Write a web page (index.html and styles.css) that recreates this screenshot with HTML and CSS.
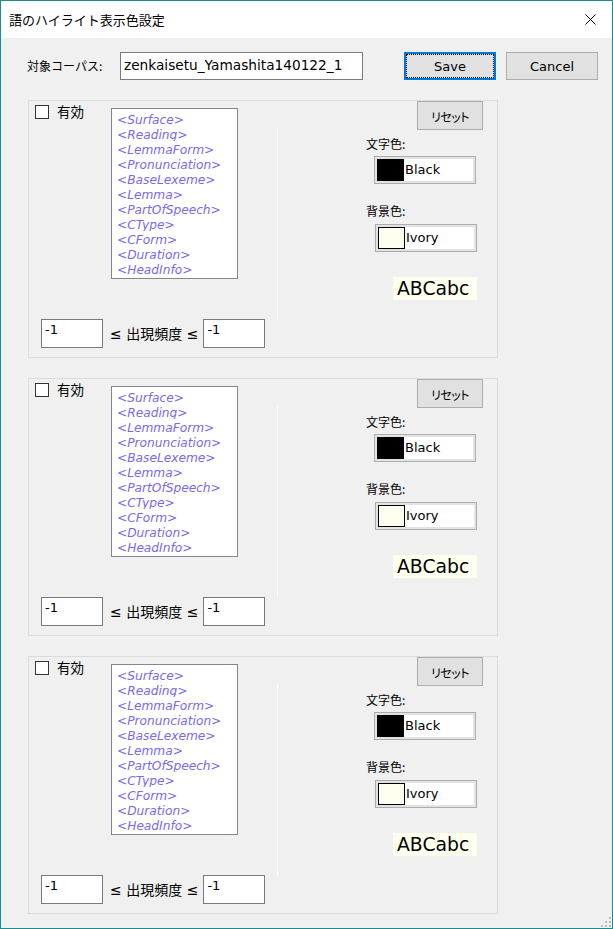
FILE: index.html
```html
<!DOCTYPE html>
<html lang="ja">
<head>
<meta charset="utf-8">
<title>語のハイライト表示色設定</title>
<link rel="stylesheet" href="styles.css">
</head>
<body>
<div class="window">
  <div class="titlebar">
    <span class="title">語のハイライト表示色設定</span>
    <svg class="close" width="11" height="11" viewBox="0 0 11 11"><path d="M0.5 0.5 L10.5 10.5 M10.5 0.5 L0.5 10.5" stroke="#000" stroke-width="1" fill="none"/></svg>
  </div>
  <div class="client">
    <div class="toprow">
      <span class="corpus-label">対象コーパス:</span>
      <div class="textbox corpus">zenkaisetu_Yamashita140122_1</div>
      <div class="btn btn-default">Save</div>
      <div class="btn">Cancel</div>
    </div>

    <div class="panels">
      <div class="panel">
        <div class="left">
          <div class="left-top">
            <div class="check"><span class="box"></span><span class="check-label">有効</span></div>
            <div class="listbox">
              <div class="item"><span>&lt;Surface&gt;</span></div>
              <div class="item"><span>&lt;Reading&gt;</span></div>
              <div class="item"><span>&lt;LemmaForm&gt;</span></div>
              <div class="item"><span>&lt;Pronunciation&gt;</span></div>
              <div class="item"><span>&lt;BaseLexeme&gt;</span></div>
              <div class="item"><span>&lt;Lemma&gt;</span></div>
              <div class="item"><span>&lt;PartOfSpeech&gt;</span></div>
              <div class="item"><span>&lt;CType&gt;</span></div>
              <div class="item"><span>&lt;CForm&gt;</span></div>
              <div class="item"><span>&lt;Duration&gt;</span></div>
              <div class="item"><span>&lt;HeadInfo&gt;</span></div>
            </div>
          </div>
          <div class="left-bottom">
            <div class="textbox small">-1</div>
            <span class="freq">≤ 出現頻度 ≤</span>
            <div class="textbox small">-1</div>
          </div>
        </div>
        <div class="sep"></div>
        <div class="right">
          <div class="btn reset">リセット</div>
          <span class="lbl lbl1">文字色:</span>
          <div class="combo combo1"><span class="swatch black"></span><span class="cname">Black</span></div>
          <span class="lbl lbl2">背景色:</span>
          <div class="combo combo2"><span class="swatch ivory"></span><span class="cname">Ivory</span></div>
          <div class="preview">ABCabc</div>
        </div>
      </div>

      <div class="panel">
        <div class="left">
          <div class="left-top">
            <div class="check"><span class="box"></span><span class="check-label">有効</span></div>
            <div class="listbox">
              <div class="item"><span>&lt;Surface&gt;</span></div>
              <div class="item"><span>&lt;Reading&gt;</span></div>
              <div class="item"><span>&lt;LemmaForm&gt;</span></div>
              <div class="item"><span>&lt;Pronunciation&gt;</span></div>
              <div class="item"><span>&lt;BaseLexeme&gt;</span></div>
              <div class="item"><span>&lt;Lemma&gt;</span></div>
              <div class="item"><span>&lt;PartOfSpeech&gt;</span></div>
              <div class="item"><span>&lt;CType&gt;</span></div>
              <div class="item"><span>&lt;CForm&gt;</span></div>
              <div class="item"><span>&lt;Duration&gt;</span></div>
              <div class="item"><span>&lt;HeadInfo&gt;</span></div>
            </div>
          </div>
          <div class="left-bottom">
            <div class="textbox small">-1</div>
            <span class="freq">≤ 出現頻度 ≤</span>
            <div class="textbox small">-1</div>
          </div>
        </div>
        <div class="sep"></div>
        <div class="right">
          <div class="btn reset">リセット</div>
          <span class="lbl lbl1">文字色:</span>
          <div class="combo combo1"><span class="swatch black"></span><span class="cname">Black</span></div>
          <span class="lbl lbl2">背景色:</span>
          <div class="combo combo2"><span class="swatch ivory"></span><span class="cname">Ivory</span></div>
          <div class="preview">ABCabc</div>
        </div>
      </div>

      <div class="panel">
        <div class="left">
          <div class="left-top">
            <div class="check"><span class="box"></span><span class="check-label">有効</span></div>
            <div class="listbox">
              <div class="item"><span>&lt;Surface&gt;</span></div>
              <div class="item"><span>&lt;Reading&gt;</span></div>
              <div class="item"><span>&lt;LemmaForm&gt;</span></div>
              <div class="item"><span>&lt;Pronunciation&gt;</span></div>
              <div class="item"><span>&lt;BaseLexeme&gt;</span></div>
              <div class="item"><span>&lt;Lemma&gt;</span></div>
              <div class="item"><span>&lt;PartOfSpeech&gt;</span></div>
              <div class="item"><span>&lt;CType&gt;</span></div>
              <div class="item"><span>&lt;CForm&gt;</span></div>
              <div class="item"><span>&lt;Duration&gt;</span></div>
              <div class="item"><span>&lt;HeadInfo&gt;</span></div>
            </div>
          </div>
          <div class="left-bottom">
            <div class="textbox small">-1</div>
            <span class="freq">≤ 出現頻度 ≤</span>
            <div class="textbox small">-1</div>
          </div>
        </div>
        <div class="sep"></div>
        <div class="right">
          <div class="btn reset">リセット</div>
          <span class="lbl lbl1">文字色:</span>
          <div class="combo combo1"><span class="swatch black"></span><span class="cname">Black</span></div>
          <span class="lbl lbl2">背景色:</span>
          <div class="combo combo2"><span class="swatch ivory"></span><span class="cname">Ivory</span></div>
          <div class="preview">ABCabc</div>
        </div>
      </div>
    </div>

    <svg class="grip" width="12" height="12" viewBox="0 0 12 12">
      <rect x="9" y="1" width="2" height="2" fill="#bcbcbc"/>
      <rect x="9" y="5" width="2" height="2" fill="#bcbcbc"/>
      <rect x="5" y="5" width="2" height="2" fill="#bcbcbc"/>
      <rect x="9" y="9" width="2" height="2" fill="#bcbcbc"/>
      <rect x="5" y="9" width="2" height="2" fill="#bcbcbc"/>
      <rect x="1" y="9" width="2" height="2" fill="#bcbcbc"/>
    </svg>
  </div>
</div>
</body>
</html>
```

FILE: styles.css
```css
* { box-sizing: border-box; }

html, body {
  margin: 0;
  padding: 0;
  background: #f0f0f0;
}

body {
  font-family: "DejaVu Sans", "Noto Sans CJK JP", sans-serif;
  color: #000;
}

.window {
  width: 613px;
  height: 929px;
  border: 1px solid #1b8b8e;
  background: #f0f0f0;
  display: flex;
  flex-direction: column;
  position: relative;
}

.titlebar {
  height: 37px;
  background: #fff;
  display: flex;
  align-items: center;
  justify-content: space-between;
  padding-left: 8px;
  padding-right: 16px;
  flex: none;
}

.title {
  font-family: "Noto Sans CJK JP", sans-serif;
  font-size: 13px;
  line-height: 18px;
  margin-top: 1px;
}

.close { display: block; }

.client {
  flex: 1;
  position: relative;
}

.toprow {
  display: flex;
  align-items: center;
  margin-top: 14px;
  height: 28px;
}

.corpus-label {
  font-family: "Noto Sans CJK JP", sans-serif;
  font-size: 12px;
  width: 93px;
  margin-left: 26px;
  line-height: 16px;
}

.textbox {
  background: #fff;
  border: 1px solid #7a7a7a;
}

.corpus {
  width: 243px;
  height: 28px;
  margin-right: 41px;
  font-size: 13.7px;
  line-height: 18px;
  padding: 3px 0 0 3px;
  white-space: nowrap;
  overflow: hidden;
}

.btn {
  width: 92px;
  height: 28px;
  background: #e1e1e1;
  border: 1px solid #adadad;
  font-size: 13px;
  display: flex;
  align-items: center;
  justify-content: center;
  padding-top: 1px;
}

.btn-default {
  border: 2px solid #0078d7;
  outline: 1px dotted #000;
  outline-offset: -3px;
  margin-right: 10px;
}

.panels {
  margin-left: 27px;
  margin-top: 20px;
  display: flex;
  flex-direction: column;
  gap: 20px;
}

.panel {
  width: 470px;
  height: 258px;
  border: 1px solid #dcdcdc;
  display: flex;
}

.left {
  width: 248px;
  display: flex;
  flex-direction: column;
  flex: none;
}

.left-top {
  display: flex;
  align-items: flex-start;
}

.check {
  width: 76px;
  margin-left: 6px;
  margin-top: 4px;
  display: flex;
  align-items: center;
}

.box {
  width: 14px;
  height: 14px;
  border: 1px solid #333;
  background: #fff;
  flex: none;
}

.check-label {
  font-family: "Noto Sans CJK JP", sans-serif;
  font-size: 13.5px;
  line-height: 15px;
  margin-left: 8px;
  margin-top: -1px;
}

.listbox {
  width: 127px;
  height: 171px;
  margin-top: 7px;
  background: #fff;
  border: 1px solid #828790;
  padding: 2px 0 0 5px;
  overflow: hidden;
}

.item {
  height: 15px;
  overflow: hidden;
  font-size: 12.2px;
  font-style: italic;
  color: #7b68ee;
  white-space: nowrap;
}

.item span {
  display: block;
  line-height: 15px;
  padding-top: 2px;
}

.left-bottom {
  display: flex;
  align-items: center;
  margin-top: 40px;
  padding-left: 12px;
}

.small {
  width: 62px;
  height: 29px;
  font-size: 13px;
  line-height: 16px;
  padding: 2px 0 0 3px;
}

.freq {
  font-size: 14px;
  line-height: 18px;
  margin: 0 5px 0 7px;
  white-space: nowrap;
}

.sep {
  width: 1px;
  height: 191px;
  margin-top: 27px;
  background: #fff;
  flex: none;
}

.right {
  flex: 1;
  display: flex;
  flex-direction: column;
  align-items: flex-start;
  padding-left: 88px;
}

.reset {
  align-self: flex-end;
  width: 66px;
  height: 29px;
  margin-right: 14px;
  font-family: "Noto Sans CJK JP", sans-serif;
  font-size: 12px;
  font-feature-settings: "palt";
  letter-spacing: -0.5px;
}

.lbl {
  font-family: "Noto Sans CJK JP", sans-serif;
  font-size: 12px;
  line-height: 16px;
}

.lbl1 { margin-top: 6px; }
.lbl2 { margin-top: 19px; }

.combo {
  width: 102px;
  height: 28px;
  border: 1px solid #adadad;
  background: #fff;
  box-shadow: inset 0 0 0 2px #e3e3e3;
  padding: 2px;
  display: flex;
  align-items: center;
}

.combo1 { margin-left: 8px; margin-top: 4px; }
.combo2 { margin-left: 9px; margin-top: 5px; }

.swatch {
  width: 27px;
  height: 22px;
  flex: none;
}

.black { background: #000; }
.ivory { background: #fffff0; border: 1px solid #000; }

.cname {
  font-size: 13px;
  line-height: 16px;
  margin-left: 1px;
}

.preview {
  margin-left: 27px;
  margin-top: 25px;
  width: 84px;
  height: 23px;
  background: #fffff0;
  font-size: 18.8px;
  line-height: 23px;
  padding-left: 4px;
  white-space: nowrap;
}

.grip {
  position: absolute;
  right: 0;
  bottom: 0;
}
```
